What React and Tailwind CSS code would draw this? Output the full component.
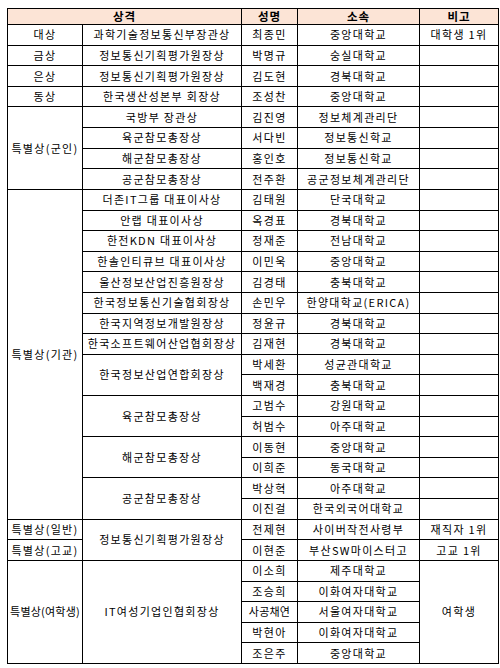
import React from "react";

const H = ({ children, wide }) => (
  <div
    className={`bg-[#fce4d6] flex items-center justify-center font-bold text-[11.5px] leading-none tracking-[1px] ${
      wide ? "col-span-2" : ""
    }`}
  >
    {children}
  </div>
);

const C = ({ children, span, tight }) => {
  const spans = {
    1: "",
    2: "row-span-2",
    4: "row-span-4",
    5: "row-span-5",
    16: "row-span-16",
  };
  return (
    <div
      className={`bg-white flex items-center justify-center whitespace-nowrap overflow-hidden ${
        tight ? "tracking-[0.2px]" : "tracking-[1.3px]"
      } ${spans[span || 1]}`}
    >
      {children}
    </div>
  );
};

export default function App() {
  return (
    <div className="w-[500px] h-[668px] bg-white pt-[8px] pl-[7px] font-['Noto_Sans_CJK_KR','Noto_Sans',sans-serif] text-[11px] leading-none text-black">
      <div className="w-[492px] h-[656px] bg-black p-px grid gap-px grid-cols-[74px_158px_55px_121px_78px] grid-rows-[15px_repeat(31,minmax(0,1fr))]">
        <H wide>상격</H>
        <H>성명</H>
        <H>소속</H>
        <H>비고</H>

        <C>대상</C>
        <C>과학기술정보통신부장관상</C>
        <C>최종민</C>
        <C>중앙대학교</C>
        <C>대학생 1위</C>

        <C>금상</C>
        <C>정보통신기획평가원장상</C>
        <C>박명규</C>
        <C>숭실대학교</C>
        <C></C>

        <C>은상</C>
        <C>정보통신기획평가원장상</C>
        <C>김도현</C>
        <C>경북대학교</C>
        <C></C>

        <C>동상</C>
        <C>한국생산성본부 회장상</C>
        <C>조성찬</C>
        <C>중앙대학교</C>
        <C></C>

        <C span={4}>특별상(군인)</C>
        <C>국방부 장관상</C>
        <C>김진영</C>
        <C>정보체계관리단</C>
        <C></C>

        <C>육군참모총장상</C>
        <C>서다빈</C>
        <C>정보통신학교</C>
        <C></C>

        <C>해군참모총장상</C>
        <C>홍인호</C>
        <C>정보통신학교</C>
        <C></C>

        <C>공군참모총장상</C>
        <C>전주환</C>
        <C>공군정보체계관리단</C>
        <C></C>

        <C span={16}>특별상(기관)</C>
        <C>더존IT그룹 대표이사상</C>
        <C>김태원</C>
        <C>단국대학교</C>
        <C></C>

        <C>안랩 대표이사상</C>
        <C>옥경표</C>
        <C>경북대학교</C>
        <C></C>

        <C>한전KDN 대표이사상</C>
        <C>정재준</C>
        <C>전남대학교</C>
        <C></C>

        <C>한솔인티큐브 대표이사상</C>
        <C>이민욱</C>
        <C>중앙대학교</C>
        <C></C>

        <C>울산정보산업진흥원장상</C>
        <C>김경태</C>
        <C>충북대학교</C>
        <C></C>

        <C>한국정보통신기술협회장상</C>
        <C>손민우</C>
        <C>한양대학교(ERICA)</C>
        <C></C>

        <C>한국지역정보개발원장상</C>
        <C>정윤규</C>
        <C>경북대학교</C>
        <C></C>

        <C>한국소프트웨어산업협회장상</C>
        <C>김재현</C>
        <C>경북대학교</C>
        <C></C>

        <C span={2}>한국정보산업연합회장상</C>
        <C>박세환</C>
        <C>성균관대학교</C>
        <C></C>
        <C>백재경</C>
        <C>충북대학교</C>
        <C></C>

        <C span={2}>육군참모총장상</C>
        <C>고범수</C>
        <C>강원대학교</C>
        <C></C>
        <C>허범수</C>
        <C>아주대학교</C>
        <C></C>

        <C span={2}>해군참모총장상</C>
        <C>이동현</C>
        <C>중앙대학교</C>
        <C></C>
        <C>이희준</C>
        <C>동국대학교</C>
        <C></C>

        <C span={2}>공군참모총장상</C>
        <C>박상혁</C>
        <C>아주대학교</C>
        <C></C>
        <C>이진걸</C>
        <C>한국외국어대학교</C>
        <C></C>

        <C>특별상(일반)</C>
        <C span={2}>정보통신기획평가원장상</C>
        <C>전제현</C>
        <C>사이버작전사령부</C>
        <C>재직자 1위</C>

        <C>특별상(고교)</C>
        <C>이현준</C>
        <C>부산SW마이스터고</C>
        <C>고교 1위</C>

        <C span={5} tight>특별상(여학생)</C>
        <C span={5}>IT여성기업인협회장상</C>
        <C>이소희</C>
        <C>제주대학교</C>
        <C span={5}>여학생</C>
        <C>조승희</C>
        <C>이화여자대학교</C>
        <C tight>사공채연</C>
        <C>서울여자대학교</C>
        <C>박현아</C>
        <C>이화여자대학교</C>
        <C>조은주</C>
        <C>중앙대학교</C>
      </div>
    </div>
  );
}
